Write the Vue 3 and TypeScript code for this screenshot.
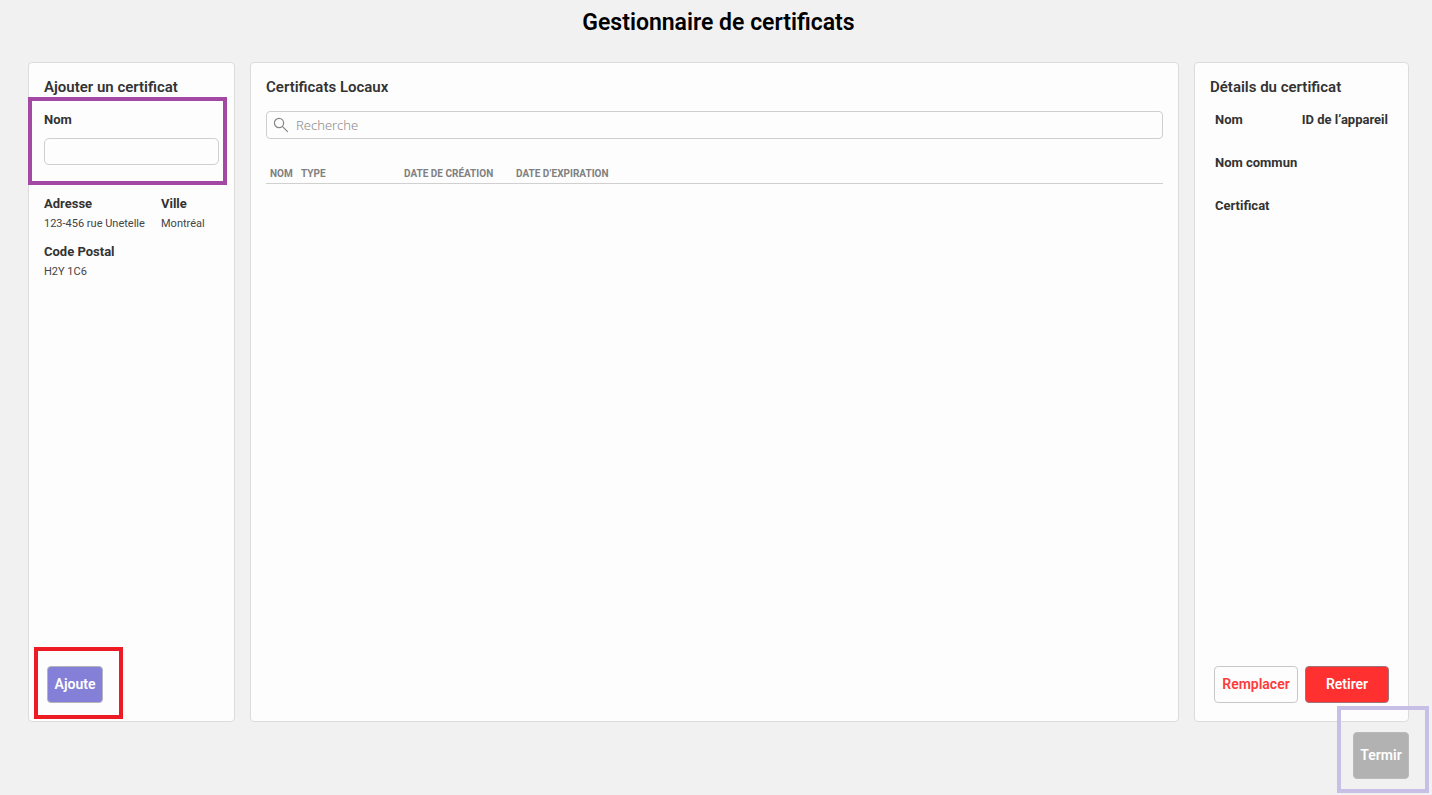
<script setup lang="ts">
import { ref } from 'vue'

const name = ref<string>('')
const search = ref<string>('')

const columns: { key: string; label: string }[] = [
  { key: 'name', label: 'NOM' },
  { key: 'type', label: 'TYPE' },
  { key: 'created', label: 'DATE DE CRÉATION' },
  { key: 'expires', label: 'DATE D’EXPIRATION' },
]
</script>

<template>
  <div class="page">
    <h1>Gestionnaire de certificats</h1>

    <main class="panels">
      <section class="card">
        <h2>Ajouter un certificat</h2>
        <div class="field marked marked-purple">
          <label for="cert-name">Nom</label>
          <input id="cert-name" v-model="name" type="text" />
        </div>
        <dl class="address">
          <div>
            <dt>Adresse</dt>
            <dd>123-456 rue Unetelle</dd>
          </div>
          <div>
            <dt>Ville</dt>
            <dd>Montréal</dd>
          </div>
          <div>
            <dt>Code Postal</dt>
            <dd>H2Y 1C6</dd>
          </div>
        </dl>
        <div class="actions actions-add">
          <div class="marked marked-red">
            <button type="button" class="btn btn-add">Ajoute</button>
          </div>
        </div>
      </section>

      <section class="card">
        <h2>Certificats Locaux</h2>
        <div class="search">
          <svg viewBox="0 0 16 16" width="16" height="16" aria-hidden="true">
            <circle cx="6" cy="6" r="4.6" />
            <path d="M9.3 9.3 14.8 14.8" />
          </svg>
          <input v-model="search" type="text" placeholder="Recherche" aria-label="Recherche" />
        </div>
        <table>
          <thead>
            <tr>
              <th v-for="c in columns" :key="c.key" scope="col" :class="'col-' + c.key">{{ c.label }}</th>
            </tr>
          </thead>
        </table>
      </section>

      <section class="card">
        <h2>Détails du certificat</h2>
        <dl class="details">
          <dt>Nom</dt>
          <dt class="device">ID de l’appareil</dt>
          <dt class="wide">Nom commun</dt>
          <dt class="wide">Certificat</dt>
        </dl>
        <div class="actions">
          <button type="button" class="btn btn-replace">Remplacer</button>
          <button type="button" class="btn btn-remove">Retirer</button>
        </div>
      </section>
    </main>

    <footer>
      <div class="marked marked-lavender">
        <button type="button" class="btn btn-finish">Termir</button>
      </div>
    </footer>
  </div>
</template>

<style>
body {
  margin: 0;
  background: #f1f1f1;
}
</style>

<style scoped>
* {
  box-sizing: border-box;
}

.page {
  display: flex;
  flex-direction: column;
  min-height: 100vh;
  padding: 0 23px 16px 28px;
  background: #f1f1f1;
  color: #333;
  font-family: Roboto, "Liberation Sans", sans-serif;
}

h1 {
  margin: 9px 0 25px;
  color: #000;
  font-size: 23px;
  font-weight: 600;
  line-height: 28px;
  text-align: center;
}

.panels {
  display: grid;
  flex: 1;
  grid-template-columns: 207px minmax(0, 1fr) 215px;
  gap: 15px;
}

.card {
  display: flex;
  flex-direction: column;
  padding: 14px 15px 18px;
  border: 1px solid #dcdcdc;
  border-radius: 4px;
  background: #fdfdfd;
}

h2 {
  margin: 0;
  font-size: 15px;
  font-weight: 600;
  line-height: 20px;
}

.marked {
  position: relative;
}

.marked::after {
  position: absolute;
  border: 4px solid;
  content: "";
  pointer-events: none;
}

.marked-purple::after {
  inset: 0 -8px 0 -16px;
  border-color: #a349a4;
}

.marked-red::after {
  inset: -19px -20px -16px -13px;
  border-color: #ed1c24;
}

.marked-lavender::after {
  inset: -26px -20px -14px -16px;
  border-color: #c8bfe7;
}

.field {
  display: flex;
  flex-direction: column;
  gap: 8px;
  padding: 13px 0 20px;
}

.field label,
dt {
  font-size: 13px;
  font-weight: 700;
  line-height: 20px;
}

.field input {
  width: 100%;
  height: 27px;
  padding: 0 8px;
  border: 1px solid #cfcfcf;
  border-radius: 5px;
  background: #fdfdfd;
  font: inherit;
  font-size: 13px;
}

dl,
dd {
  margin: 0;
}

.address {
  display: grid;
  grid-template-columns: 103px 1fr;
  gap: 8px 14px;
  margin-top: 9px;
  white-space: nowrap;
}

dd {
  color: #444;
  font-size: 11px;
  line-height: 20px;
}

.actions {
  display: flex;
  gap: 7px;
  margin-top: auto;
  padding: 0 4px;
}

.actions-add {
  padding: 0 3px;
}

.btn {
  height: 37px;
  padding: 0 0 2px;
  border: 1px solid #b4b4bc;
  border-radius: 4px;
  color: #fff;
  font-family: inherit;
  font-size: 14px;
  font-weight: 600;
  cursor: pointer;
}

.btn-add {
  display: block;
  width: 56px;
  background: #8480d8;
}

.btn-replace,
.btn-remove {
  flex: 1;
}

.btn-replace {
  border-color: #c8c8c8;
  background: #fdfdfd;
  color: #fd3a3a;
}

.btn-remove {
  border-color: #a07474;
  background: #fe3030;
}

.btn-finish {
  display: block;
  width: 56px;
  height: 47px;
  border-color: #bababa;
  background: #b2b2b2;
}

.search {
  display: flex;
  align-items: center;
  gap: 7px;
  height: 28px;
  margin-top: 14px;
  padding: 0 6px;
  border: 1px solid #cfcfcf;
  border-radius: 4px;
}

.search svg {
  flex: none;
  fill: none;
  stroke: #858585;
  stroke-width: 1.2;
}

.search input {
  flex: 1;
  min-width: 0;
  height: 20px;
  padding: 0;
  border: 0;
  outline: 0;
  background: transparent;
  font-family: "Noto Sans", "Open Sans", sans-serif;
  font-size: 13px;
  font-weight: 300;
}

.search input::placeholder {
  color: #8c8c8c;
  opacity: 1;
}

table {
  width: 100%;
  margin-top: 24px;
  border-collapse: collapse;
  table-layout: fixed;
}

th {
  height: 20px;
  padding: 3px 0 0 4px;
  border-bottom: 1px solid #d0d0d0;
  color: #808080;
  font-size: 10px;
  font-weight: 700;
  line-height: 16px;
  text-align: left;
  white-space: nowrap;
}

.col-name {
  width: 31px;
}

.col-type {
  width: 103px;
}

.col-created {
  width: 112px;
}

.details {
  display: grid;
  grid-template-columns: 1fr auto;
  gap: 23px 0;
  margin-top: 13px;
  padding: 0 5px;
}

.wide {
  grid-column: 1 / -1;
}

footer {
  display: flex;
  justify-content: flex-end;
  padding-top: 10px;
}
</style>
